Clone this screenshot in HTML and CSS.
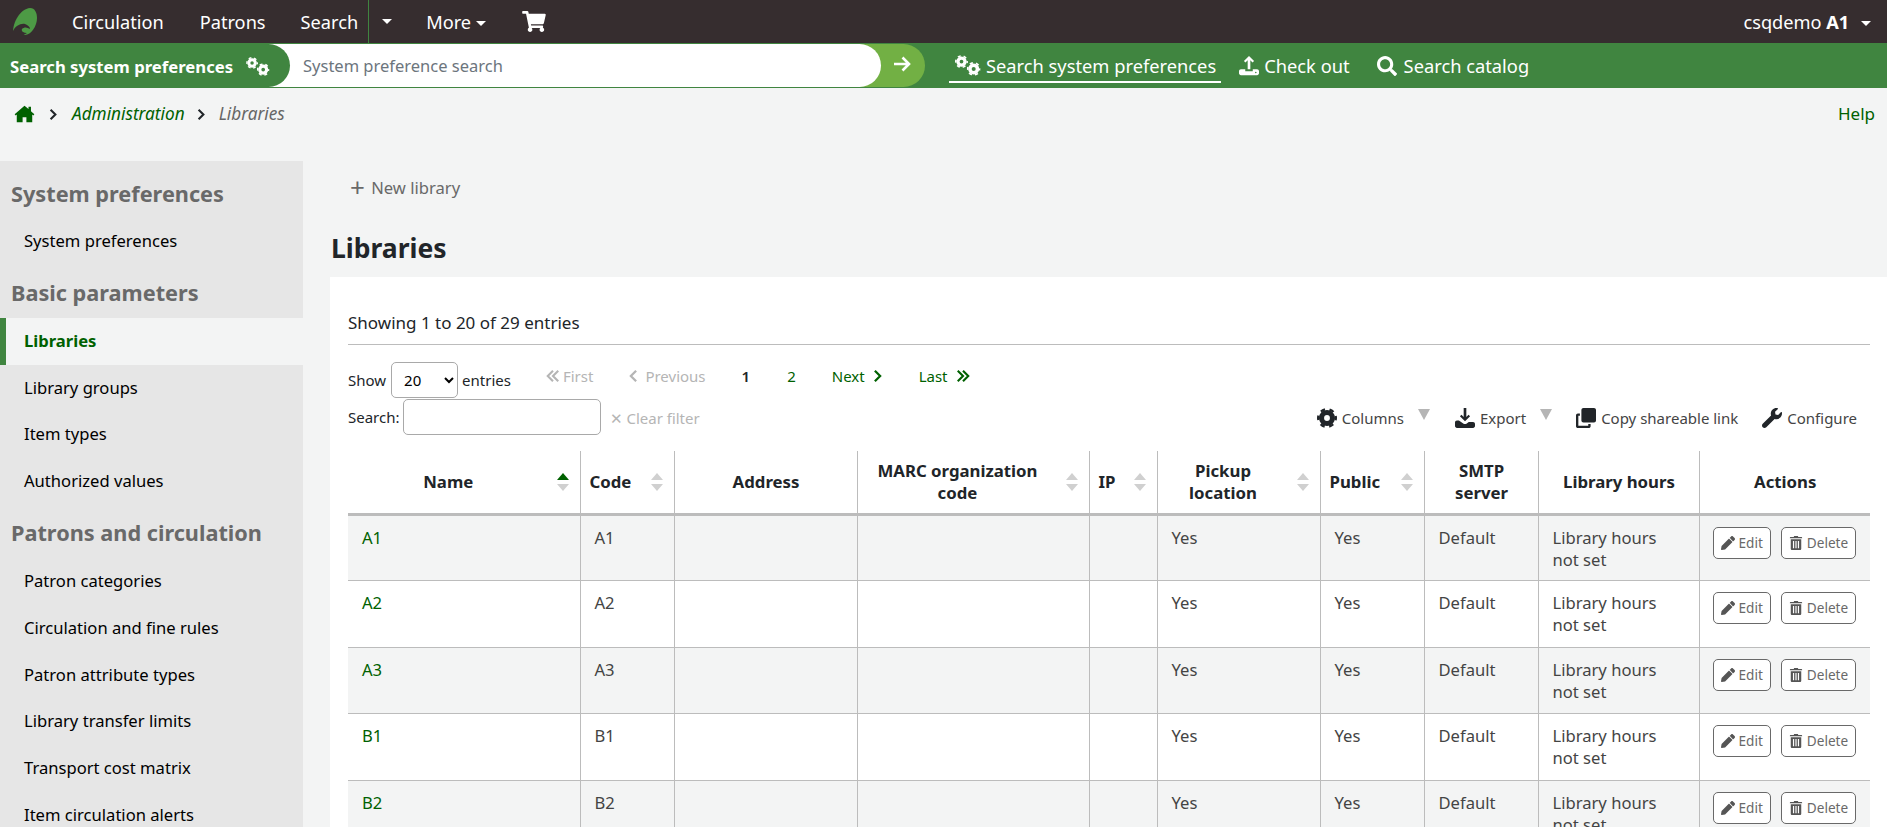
FILE: index.html
```html
<!DOCTYPE html>
<html lang="en">
<head>
  <meta charset="UTF-8" />
  <meta name="viewport" content="width=device-width, initial-scale=1" />
  <title>Libraries › Administration</title>
  <link rel="stylesheet" href="styles.css">
</head>
<body>

  <svg class="sprite" aria-hidden="true">
    <symbol id="i-gear" viewBox="0 0 512 512">
      <circle cx="256" cy="256" r="140" fill="none" stroke="currentColor" stroke-width="130"/>
      <circle cx="256" cy="256" r="225" fill="none" stroke="currentColor" stroke-width="62" stroke-dasharray="117.8 117.8" stroke-dashoffset="59"/>
    </symbol>
    <symbol id="i-gears" viewBox="0 0 640 512">
      <use href="#i-gear" x="0" y="0" width="320" height="320"/>
      <use href="#i-gear" x="290" y="170" width="340" height="340"/>
    </symbol>
    <symbol id="i-search" viewBox="0 0 512 512">
      <path d="M505 442.7L405.3 343c-4.5-4.5-10.6-7-17-7H372c27.6-35.3 44-79.7 44-128C416 93.1 322.9 0 208 0S0 93.1 0 208s93.1 208 208 208c48.3 0 92.7-16.4 128-44v16.3c0 6.4 2.5 12.5 7 17l99.7 99.7c9.4 9.4 24.6 9.4 33.9 0l28.3-28.3c9.4-9.4 9.4-24.6.1-34zM208 336c-70.7 0-128-57.2-128-128 0-70.7 57.2-128 128-128 70.7 0 128 57.2 128 128 0 70.7-57.2 128-128 128z"/>
    </symbol>
    <symbol id="i-cart" viewBox="0 0 576 512">
      <path d="M528.12 301.319l47.273-208C578.806 78.301 567.391 67 551.99 64H159.208l-9.166-44.81C147.758 8.021 137.93 0 126.529 0H24C10.745 0 0 10.745 0 24v16c0 13.255 10.745 24 24 24h69.883l70.248 343.435C147.325 417.1 136 435.222 136 456c0 30.928 25.072 56 56 56s56-25.072 56-56c0-15.674-6.447-29.835-16.824-40h209.647C430.447 426.165 424 440.326 424 456c0 30.928 25.072 56 56 56s56-25.072 56-56c0-22.172-12.888-41.332-31.579-50.405l5.517-24.276c3.413-15.018-8.002-29.319-23.403-29.319H218.117l-6.545-32h293.145c11.206 0 20.92-7.754 23.403-18.681z"/>
    </symbol>
    <symbol id="i-home" viewBox="0 0 576 512">
      <path d="M288 20L8 262l30 34 30-26v222h166V346h108v146h166V270l30 26 30-34-96-83V50h-70v66z"/>
    </symbol>
    <symbol id="i-upload" viewBox="0 0 512 512">
      <path d="M256 0l130 130-40 36-56-56v230h-68V110l-56 56-40-36zM50 340h110v50h192v-50h110c27 0 50 23 50 50v52c0 27-23 50-50 50H50c-27 0-50-23-50-50v-52c0-27 23-50 50-50z"/>
      <circle cx="430" cy="420" r="20" fill="#408540"/>
    </symbol>
    <symbol id="i-download" viewBox="0 0 512 512">
      <path d="M222 0h68v230l56-56 40 36-130 130-130-130 40-36 56 56zM50 320h50l120 80c22 14 50 14 72 0l60-40h110c27 0 50 23 50 50v52c0 27-23 50-50 50H50c-27 0-50-23-50-50v-92c0-27 23-50 50-50z"/>
    </symbol>
    <symbol id="i-copy" viewBox="0 0 512 512">
      <path d="M190 0h270c28 0 52 24 52 52v270c0 28-24 52-52 52H190c-28 0-52-24-52-52V52c0-28 24-52 52-52z"/>
      <path d="M100 138v60H60v254h254v-40h60v52c0 27-21 48-48 48H48c-27 0-48-21-48-48V186c0-27 21-48 48-48z"/>
    </symbol>
    <symbol id="i-wrench" viewBox="0 0 512 512">
      <path d="M507.73 109.1c-2.24-9.03-13.54-12.09-20.12-5.51l-74.36 74.36-67.88-11.31-11.31-67.88 74.36-74.36c6.62-6.62 3.43-17.9-5.66-20.16-47.38-11.74-99.55.91-136.58 37.93-39.64 39.64-50.55 97.1-34.05 147.2L18.74 402.76c-24.99 24.99-24.99 65.51 0 90.5 24.99 24.99 65.51 24.99 90.5 0l213.21-213.21c50.12 16.71 107.47 5.68 147.37-34.22 37.07-37.07 49.7-89.32 37.91-136.73z"/>
    </symbol>
    <symbol id="i-pencil" viewBox="0 0 512 512">
      <path d="M497.9 142.1l-46.1 46.1c-4.7 4.7-12.3 4.7-17 0l-111-111c-4.7-4.7-4.7-12.3 0-17l46.1-46.1c18.7-18.7 49.1-18.7 67.9 0l60.1 60.1c18.8 18.7 18.8 49.1 0 67.9zM284.2 99.8L21.6 362.4.4 483.9c-2.9 16.4 11.4 30.6 27.8 27.8l121.5-21.3 262.6-262.6c4.7-4.7 4.7-12.3 0-17l-111-111c-4.8-4.7-12.4-4.7-17.1 0z"/>
    </symbol>
    <symbol id="i-trash" viewBox="0 0 448 512">
      <path fill-rule="evenodd" d="M20 40h120l16-40h136l16 40h120c11 0 20 9 20 20v20H0V60c0-11 9-20 20-20zM32 120h384v344c0 27-21 48-48 48H80c-27 0-48-21-48-48zM112 180v270h44V180zM202 180v270h44V180zM292 180v270h44V180z"/>
    </symbol>
    <symbol id="i-next" viewBox="0 0 10 16">
      <path d="M2 2l6 6-6 6" fill="none" stroke="currentColor" stroke-width="2.6"/>
    </symbol>
    <symbol id="i-prev" viewBox="0 0 10 16">
      <path d="M8 2L2 8l6 6" fill="none" stroke="currentColor" stroke-width="2.6"/>
    </symbol>
    <symbol id="i-last" viewBox="0 0 16 16">
      <path d="M2 2l6 6-6 6M8 2l6 6-6 6" fill="none" stroke="currentColor" stroke-width="2.4"/>
    </symbol>
    <symbol id="i-first" viewBox="0 0 16 16">
      <path d="M8 2L2 8l6 6M14 2L8 8l6 6" fill="none" stroke="currentColor" stroke-width="2.4"/>
    </symbol>
  </svg>

  <nav class="topbar">
    <a class="logo" href="#">
      <svg viewBox="0 0 24 27" width="24" height="27">
        <path fill="#4d9a45" d="M17 0C22 0 24 5 24 10C24 18 18 27 12 27C7 27 3 26 0 24C0 14 7 1 17 0z"/>
        <path fill="#362d2f" d="M0 23C2 18 8 15 12 16C15 17 17 19 17 21C14 19 11 19 9 21C8 23 10 25 14 25L9 28H0z"/>
      </svg>
    </a>
    <a class="top-link" href="#">Circulation</a>
    <a class="top-link patrons-link" href="#">Patrons</a>
    <a class="top-link search-link" href="#">Search</a>
    <a class="top-split" href="#"><span class="caret"></span></a>
    <a class="top-link more-link" href="#">More <span class="caret"></span></a>
    <a class="top-cart" href="#"><svg class="cart-icon"><use href="#i-cart"/></svg></a>
    <a class="top-user" href="#">csqdemo <b>A1</b> <span class="caret user-caret"></span></a>
  </nav>

  <div class="searchbar">
    <form class="pref-form">
      <label class="pref-label">Search system preferences<svg class="gears-label"><use href="#i-gears"/></svg></label>
      <input class="pref-input" type="text" placeholder="System preference search" />
      <button class="pref-go" type="button">
        <svg viewBox="0 0 20 20" width="20" height="20"><path d="M2 10h15M10.500 3.500l6.500 6.500-6.500 6.500" fill="none" stroke="currentColor" stroke-width="2.6"/></svg>
      </button>
    </form>
    <ul class="search-tabs">
      <li class="tab active"><a href="#"><svg class="gears-tab"><use href="#i-gears"/></svg> Search system preferences</a></li>
      <li class="tab"><a href="#"><svg class="tab-icon"><use href="#i-upload"/></svg> Check out</a></li>
      <li class="tab tab-catalog"><a href="#"><svg class="tab-icon"><use href="#i-search"/></svg> Search catalog</a></li>
    </ul>
  </div>

  <div class="crumbs">
    <a class="crumb-home" href="#"><svg class="home-icon"><use href="#i-home"/></svg></a>
    <svg class="crumb-sep"><use href="#i-next"/></svg>
    <a class="crumb" href="#">Administration</a>
    <svg class="crumb-sep second"><use href="#i-next"/></svg>
    <span class="crumb current">Libraries</span>
    <a class="help" href="#">Help</a>
  </div>

  <div class="layout">
    <aside class="sidebar">
      <h5 class="first">System preferences</h5>
      <a href="#">System preferences</a>
      <h5>Basic parameters</h5>
      <a class="active" href="#">Libraries</a>
      <a href="#">Library groups</a>
      <a href="#">Item types</a>
      <a href="#">Authorized values</a>
      <h5>Patrons and circulation</h5>
      <a href="#">Patron categories</a>
      <a href="#">Circulation and fine rules</a>
      <a href="#">Patron attribute types</a>
      <a href="#">Library transfer limits</a>
      <a href="#">Transport cost matrix</a>
      <a href="#">Item circulation alerts</a>
    </aside>

    <main class="main">
      <div class="toolbar"><a href="#"><span class="plus">+</span> New library</a></div>
      <h1>Libraries</h1>

      <div class="panel">
        <div class="info">Showing 1 to 20 of 29 entries</div>

        <div class="controls">
          <div class="control-left">
            <div class="row-top">
              <label>Show</label>
              <select class="page-size"><option>20</option></select>
              <label>entries</label>
              <div class="pager">
                <span class="off first-p"><svg class="pg2"><use href="#i-first"/></svg>First</span>
                <span class="off prev-p"><svg class="pg1"><use href="#i-prev"/></svg>Previous</span>
                <span class="num cur">1</span>
                <a class="num" href="#">2</a>
                <a class="next-p" href="#">Next<svg class="pg1"><use href="#i-next"/></svg></a>
                <a class="last-p" href="#">Last<svg class="pg2"><use href="#i-last"/></svg></a>
              </div>
            </div>
            <div class="row-search">
              <label>Search:</label>
              <input class="filter" type="text" />
              <span class="clear">✕ Clear filter</span>
            </div>
          </div>
          <div class="tools">
            <a href="#"><svg class="tool-icon"><use href="#i-gear"/></svg>Columns</a>
            <span class="tri"></span>
            <a href="#"><svg class="tool-icon"><use href="#i-download"/></svg>Export</a>
            <span class="tri tri-last"></span>
            <a class="t-copy" href="#"><svg class="tool-icon"><use href="#i-copy"/></svg>Copy shareable link</a>
            <a href="#"><svg class="tool-icon"><use href="#i-wrench"/></svg>Configure</a>
          </div>
        </div>

        <table>
          <colgroup>
            <col class="c-name"><col class="c-code"><col class="c-addr"><col class="c-marc"><col class="c-ip">
            <col class="c-pick"><col class="c-pub"><col class="c-smtp"><col class="c-hours"><col class="c-act">
          </colgroup>
          <thead>
            <tr>
              <th class="sort asc">Name</th>
              <th class="sort left">Code</th>
              <th>Address</th>
              <th class="sort">MARC organization code</th>
              <th class="sort left">IP</th>
              <th class="sort">Pickup location</th>
              <th class="sort left">Public</th>
              <th>SMTP server</th>
              <th>Library hours</th>
              <th>Actions</th>
            </tr>
          </thead>
          <tbody>
            <tr>
              <td><a href="#">A1</a></td><td>A1</td><td></td><td></td><td></td><td>Yes</td><td>Yes</td><td>Default</td><td>Library hours not set</td>
              <td class="acts"><a class="btn" href="#"><svg class="btn-icon"><use href="#i-pencil"/></svg>Edit</a><a class="btn" href="#"><svg class="btn-icon"><use href="#i-trash"/></svg>Delete</a></td>
            </tr>
            <tr>
              <td><a href="#">A2</a></td><td>A2</td><td></td><td></td><td></td><td>Yes</td><td>Yes</td><td>Default</td><td>Library hours not set</td>
              <td class="acts"><a class="btn" href="#"><svg class="btn-icon"><use href="#i-pencil"/></svg>Edit</a><a class="btn" href="#"><svg class="btn-icon"><use href="#i-trash"/></svg>Delete</a></td>
            </tr>
            <tr>
              <td><a href="#">A3</a></td><td>A3</td><td></td><td></td><td></td><td>Yes</td><td>Yes</td><td>Default</td><td>Library hours not set</td>
              <td class="acts"><a class="btn" href="#"><svg class="btn-icon"><use href="#i-pencil"/></svg>Edit</a><a class="btn" href="#"><svg class="btn-icon"><use href="#i-trash"/></svg>Delete</a></td>
            </tr>
            <tr>
              <td><a href="#">B1</a></td><td>B1</td><td></td><td></td><td></td><td>Yes</td><td>Yes</td><td>Default</td><td>Library hours not set</td>
              <td class="acts"><a class="btn" href="#"><svg class="btn-icon"><use href="#i-pencil"/></svg>Edit</a><a class="btn" href="#"><svg class="btn-icon"><use href="#i-trash"/></svg>Delete</a></td>
            </tr>
            <tr>
              <td><a href="#">B2</a></td><td>B2</td><td></td><td></td><td></td><td>Yes</td><td>Yes</td><td>Default</td><td>Library hours not set</td>
              <td class="acts"><a class="btn" href="#"><svg class="btn-icon"><use href="#i-pencil"/></svg>Edit</a><a class="btn" href="#"><svg class="btn-icon"><use href="#i-trash"/></svg>Delete</a></td>
            </tr>
          </tbody>
        </table>
      </div>
    </main>
  </div>

</body>
</html>
```

FILE: styles.css
```css
html, body {
  height: 100%;
  overflow: hidden;
}
body {
  margin: 0;
  background: #f3f4f4;
  color: #212529;
  font-family: "Noto Sans", sans-serif;
  font-size: 16.6px;
  line-height: 22px;
}
a {
  color: #006100;
  text-decoration: none;
}
.sprite {
  position: absolute;
  width: 0;
  height: 0;
}
svg {
  fill: currentColor;
}

/* top bar */
.topbar {
  display: flex;
  align-items: center;
  height: 43px;
  background: #362d2f;
  font-size: 18.2px;
}
.topbar a {
  color: #fff;
}
.logo {
  display: flex;
  margin-left: 13px;
  width: 59px;
}
.top-link {
  margin-right: 36px;
}
.patrons-link {
  margin-right: 35px;
}
.search-link {
  margin-right: 10px;
}
.top-split {
  display: flex;
  align-items: center;
  height: 43px;
  width: 58px;
  padding-left: 13px;
  box-sizing: border-box;
  border-left: 1px solid #408540;
}
.more-link {
  margin-right: 36px;
}
.caret {
  display: inline-block;
  vertical-align: middle;
  border-top: 5px solid #fff;
  border-left: 5px solid transparent;
  border-right: 5px solid transparent;
}
.top-cart {
  display: flex;
}
.cart-icon {
  width: 24px;
  height: 21px;
}
.top-user {
  margin-left: auto;
  margin-right: 16px;
}
.user-caret {
  margin-left: 7px;
}

/* search bar */
.searchbar {
  display: flex;
  align-items: center;
  height: 45px;
  background: #408540;
  color: #fff;
}
.pref-form {
  display: flex;
  height: 43px;
  width: 925px;
}
.pref-label {
  position: relative;
  z-index: 2;
  display: flex;
  align-items: center;
  flex: 0 0 290px;
  box-sizing: border-box;
  padding: 2px 0 0 10px;
  background: #408540;
  border-radius: 0 22px 22px 0;
  font-weight: 700;
  font-size: 16.7px;
  white-space: pre;
}
.gears-label {
  width: 24px;
  height: 19px;
  margin-left: 13px;
}
.pref-input {
  position: relative;
  z-index: 1;
  flex: 1;
  min-width: 0;
  margin-left: -24px;
  padding: 0 0 0 37px;
  border: 0;
  border-radius: 0 22px 22px 0;
  background: #fff;
  font: 16.5px "Noto Sans", sans-serif;
  outline: 0;
}
.pref-input::placeholder {
  color: #6c757d;
}
.pref-go {
  flex: 0 0 66px;
  margin-left: -22px;
  padding: 0 0 0 19px;
  border: 0;
  border-radius: 0 22px 22px 0;
  background: #72b044;
  color: #fff;
}
.search-tabs {
  display: flex;
  margin: 0 0 0 24px;
  padding: 0;
  list-style: none;
  font-size: 18.3px;
}
.tab {
  margin-right: 27px;
}
.tab a {
  display: flex;
  align-items: center;
  gap: 5px;
  color: #fff;
  height: 30px;
  padding: 2px 0 0;
}
.tab.active {
  border-bottom: 2px solid #fff;
  padding: 0 5px 0 6px;
  margin-right: 18px;
}
.tab-catalog a {
  gap: 7px;
}
.gears-tab {
  width: 26px;
  height: 21px;
}
.tab-icon {
  width: 20px;
  height: 20px;
}

/* breadcrumb */
.crumbs {
  display: flex;
  align-items: center;
  height: 52px;
  padding: 0 12px 0 14px;
  font-style: italic;
  font-size: 17.2px;
}
.crumb-home {
  display: flex;
}
.home-icon {
  width: 21px;
  height: 18px;
}
.crumb-sep {
  width: 8px;
  height: 13px;
  margin: 0 15px 0 14px;
  color: #212529;
}
.crumb-sep.second {
  margin: 0 14px 0 12px;
}
.current {
  color: #666;
}
.help {
  margin-left: auto;
  font-style: normal;
  font-size: 17px;
}

/* sidebar */
.layout {
  display: flex;
  margin-top: 21px;
}
.sidebar {
  flex: 0 0 303px;
  background: #e6e6e6;
}
.sidebar h5 {
  margin: 0;
  height: 53px;
  box-sizing: border-box;
  padding: 15px 0 0 11px;
  color: #696969;
  font-size: 21.7px;
  line-height: 26px;
  font-weight: 700;
}
.sidebar h5.first {
  height: 57px;
  padding-top: 20px;
}
.sidebar a {
  display: block;
  height: 46.8px;
  box-sizing: border-box;
  padding: 12px 0 0 24px;
  color: #000;
}
.sidebar a.active {
  padding-left: 18px;
  border-left: 6px solid #408540;
  background: #f3f4f4;
  color: #006100;
  font-weight: 700;
}

/* main */
.main {
  flex: 1;
  min-width: 0;
  padding-left: 27px;
}
.toolbar {
  height: 52px;
  padding: 15px 0 0 20px;
  box-sizing: border-box;
}
.toolbar a {
  color: #696969;
}
.plus {
  margin-right: 2px;
  font-size: 26px;
  vertical-align: -3px;
}
h1 {
  margin: 0 0 11px;
  padding: 17px 0 0 1px;
  font-size: 26.5px;
  line-height: 36px;
  font-weight: 700;
}
.panel {
  background: #fff;
  padding: 35px 17px 0 18px;
}
.info {
  height: 32px;
  border-bottom: 1px solid #bcbcbc;
  font-size: 17px;
}
.controls {
  display: flex;
  justify-content: space-between;
  height: 106px;
  box-sizing: border-box;
  padding-top: 16px;
  font-size: 15px;
}
.row-top, .row-search {
  display: flex;
  align-items: center;
}
.row-top {
  height: 37px;
}
.page-size {
  width: 67px;
  height: 36px;
  margin: 0 4px 0 5px;
  padding-left: 8px;
  border: 1px solid #a9a9a9;
  border-radius: 5px;
  background: #fff;
  font: 15px "Noto Sans", sans-serif;
}
.pager {
  display: flex;
  align-items: center;
  margin: -8px 0 0 35px;
}
.pager svg {
  height: 14px;
}
.pg1 {
  width: 9px;
}
.pg2 {
  width: 14px;
}
.off {
  display: flex;
  align-items: center;
  gap: 3px;
  color: #b5b5b5;
}
.next-p, .last-p {
  display: flex;
  align-items: center;
  gap: 8px;
}
.first-p {
  margin-right: 36px;
}
.prev-p {
  gap: 7px;
  margin-right: 36px;
}
.num {
  margin-right: 37px;
}
a.num {
  margin-right: 36px;
}
.num.cur {
  font-weight: 600;
}
.next-p {
  margin-right: 37px;
}
.row-search {
  height: 37px;
}
.filter {
  width: 198px;
  height: 36px;
  box-sizing: border-box;
  margin: 0 9px 0 3px;
  padding: 0;
  border: 1px solid #a9a9a9;
  border-radius: 5px;
}
.clear {
  color: #b5b5b5;
  margin-top: 3px;
}
.tools {
  display: flex;
  align-items: flex-start;
  padding: 46px 13px 0 0;
}
.tools a {
  display: flex;
  align-items: center;
  gap: 5px;
  color: #444;
}
.tool-icon {
  width: 20px;
  height: 20px;
  color: #212529;
}
.tri {
  width: 0;
  margin: 2px 25px 0 14px;
  border-top: 11px solid #b5b5b5;
  border-left: 6px solid transparent;
  border-right: 6px solid transparent;
}
.tri-last {
  margin-right: 24px;
}
.t-copy {
  margin-right: 24px;
}

/* table */
table {
  width: 1522px;
  table-layout: fixed;
  border-collapse: collapse;
}
.c-name { width: 232px; }
.c-code { width: 94px; }
.c-addr { width: 183px; }
.c-marc { width: 232px; }
.c-ip { width: 68px; }
.c-pick { width: 163px; }
.c-pub { width: 104px; }
.c-smtp { width: 114px; }
.c-hours { width: 161px; }
.c-act { width: 171px; }
th {
  position: relative;
  height: 63px;
  padding: 0 40px 0 9px;
  border-left: 1px solid #bcbcbc;
  border-bottom: 3px solid #bcbcbc;
  font-size: 16.8px;
  line-height: 22px;
  font-weight: 700;
  text-align: center;
  box-sizing: border-box;
}
th:not(.sort) {
  padding-right: 8px;
}
th:first-child, td:first-child {
  border-left: 0;
}
th.left {
  text-align: left;
}
th.sort::before, th.sort::after {
  content: "";
  position: absolute;
  right: 11px;
  border-left: 6px solid transparent;
  border-right: 6px solid transparent;
}
th.sort::before {
  top: 22px;
  border-bottom: 7px solid #d0d0d0;
}
th.sort::after {
  top: 33px;
  border-top: 7px solid #d0d0d0;
}
th.asc::before {
  border-bottom-color: #006100;
}
td {
  height: 66.6px;
  box-sizing: border-box;
  padding: 11px 14px 8px 14px;
  vertical-align: top;
  border-left: 1px solid #bcbcbc;
  border-bottom: 1px solid #bcbcbc;
  color: #444;
}
tbody tr:nth-child(odd) {
  background: #f3f4f4;
}
td.acts {
  padding: 11px 0 0 13px;
  white-space: nowrap;
}
.btn {
  display: inline-flex;
  align-items: center;
  gap: 4px;
  height: 32px;
  box-sizing: border-box;
  margin-right: 10px;
  padding: 0 7px;
  border: 1px solid #696969;
  border-radius: 5px;
  background: #fff;
  color: #696969;
  font-size: 13.6px;
}
.btn-icon {
  width: 14px;
  height: 14px;
  color: #555;
}
```
